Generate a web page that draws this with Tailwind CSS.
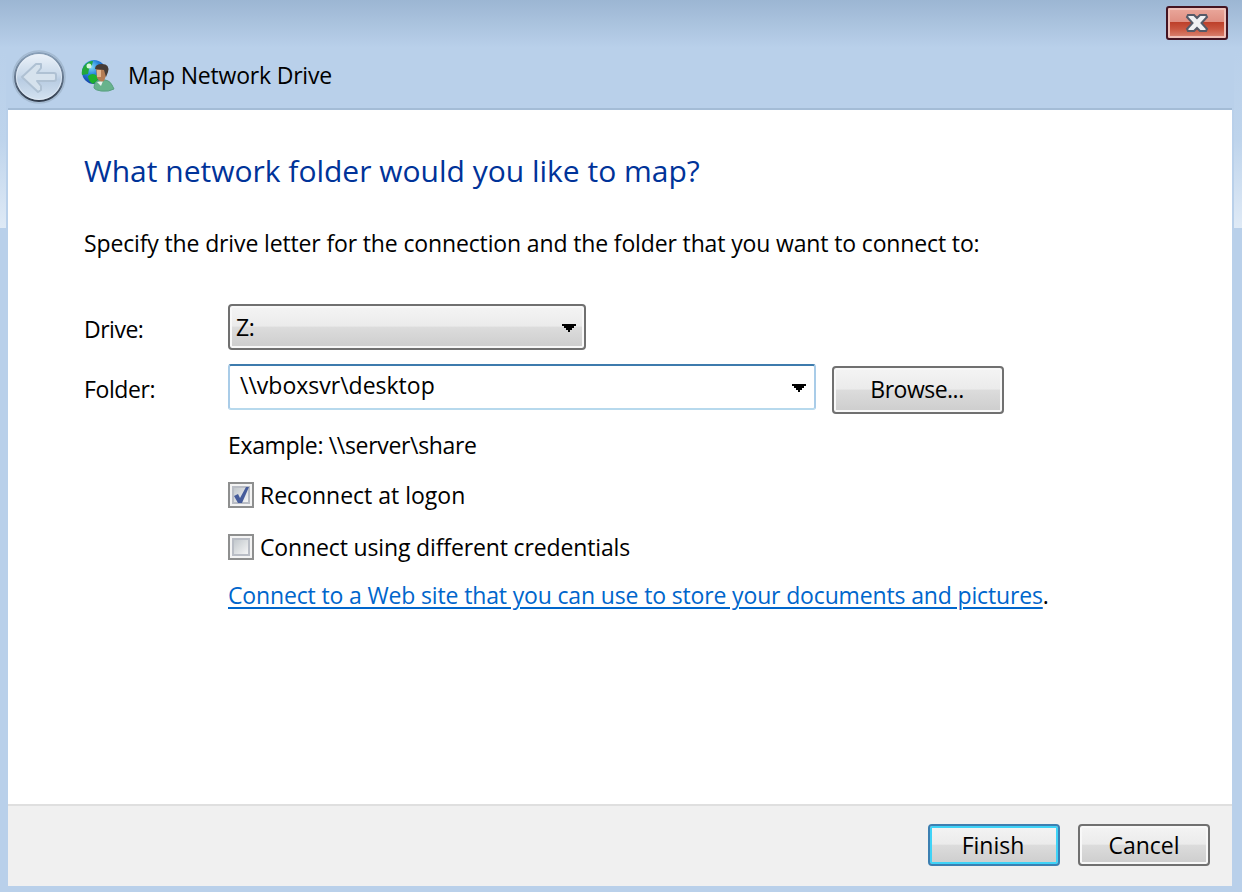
<!DOCTYPE html>
<html lang="en">
<head>
<meta charset="utf-8">
<title>Map Network Drive</title>
<script src="https://cdn.jsdelivr.net/npm/@tailwindcss/browser@4"></script>
</head>
<body class="w-[1242px] h-[892px] overflow-hidden bg-[#b9d0ea] font-['Open_Sans','Noto_Sans',sans-serif] text-[23px] leading-8 text-black whitespace-nowrap">
<div class="relative flex h-[892px] w-[1242px] flex-col pl-2 pr-[10px] pb-[6px]">
  <div class="absolute inset-x-0 top-0 h-[48px] bg-linear-to-b from-[#9cb6d3] to-[#b9d0ea]"></div>
  <div class="absolute left-0 top-[50px] h-[178px] w-[6px] bg-linear-to-b from-[#b9d0ea] via-[#bed4ec] to-[#dfeaf6]"></div>
  <div class="absolute right-0 top-[50px] h-[178px] w-[8px] bg-linear-to-b from-[#b9d0ea] via-[#bed4ec] to-[#dfeaf6]"></div>

  <header class="relative flex h-[110px] shrink-0 flex-col border-b-2 border-[#a4bcd6]">
    <div class="flex h-[40px] justify-end pt-[6px] pr-1">
      <button aria-label="Close" class="flex h-[34px] w-[62px] items-center justify-center rounded-[3px] border-2 border-[#431422] bg-[linear-gradient(#eaa89c_0%,#df8f82_46%,#bd402a_48%,#c95640_70%,#dc8877_100%)] shadow-[inset_0_0_0_2px_#efc0b9]">
        <svg width="24" height="20" viewBox="0 0 24 20"><path d="M3 2h6l3 3 3-3h6l1 2-5.500 6 5.500 6-1 2h-6l-3-3-3 3H3l-1-2 5.500-6L2 4z" fill="#f0f1f3" stroke="#555a68" stroke-width="2"/></svg>
      </button>
    </div>
    <div class="flex h-[68px] items-center pl-1">
      <svg class="mt-[5px] shrink-0" width="56" height="56" viewBox="0 0 56 56">
        <defs>
          <linearGradient id="orb" x2="0" y2="1"><stop stop-color="#edf3fa"/><stop offset=".45" stop-color="#c9d9ea"/><stop offset=".55" stop-color="#b8cce2"/><stop offset="1" stop-color="#d5e3f1"/></linearGradient>
          <linearGradient id="rim" x2="0" y2="1"><stop stop-color="#8aa0b8"/><stop offset=".5" stop-color="#66788e"/><stop offset="1" stop-color="#303b4b"/></linearGradient>
        </defs>
        <circle cx="27" cy="28" r="26" fill="none" stroke="#a4bad1" stroke-width="1.500"/>
        <circle cx="27" cy="28" r="24" fill="url(#orb)" stroke="url(#rim)" stroke-width="2"/>
        <circle cx="27" cy="28" r="22.500" fill="none" stroke="#e9f1fa" stroke-opacity=".7"/>
        <path d="M10 28 24 15h5v4l-4 5h17q2 0 2 2v4q0 2-2 2H25l4 5v4l-3 2z" fill="#d6e2ed" stroke="#afc1d3" stroke-width="2" stroke-linejoin="round"/>
      </svg>
      <svg class="ml-[12px] mt-[4px] shrink-0" width="36" height="36" viewBox="0 0 36 36">
        <defs><radialGradient id="sea" cx=".4" cy=".3" r=".7"><stop stop-color="#7fd6f4"/><stop offset=".45" stop-color="#2785dd"/><stop offset="1" stop-color="#123da4"/></radialGradient></defs>
        <circle cx="14" cy="14" r="12" fill="url(#sea)"/>
        <path d="M4 8q4-5 9-5l-1 4-3 4-1 5-6 1q-1-5 2-9z" fill="#22a73a"/><path d="M8 18q5-4 9 0l1 4-5 4q-5-3-5-8z" fill="#1cb02c"/><circle cx="9" cy="8" r="2.500" fill="#d5f7da"/>
        <path d="M14 30q0-8 7-8 8-1 11 5l2 4q-5 3-13 2-6-1-7-3z" fill="#67b38c" stroke="#5a9f82"/>
        <path d="m17 24 4 4 2-5z" fill="#e8f2ee"/>
        <path d="M16 11q2-4 7-3 5 1 4 7l-3 8q-4 2-7-3z" fill="#b47c55"/><path d="M17 12h4v7h-4z" fill="#e3b58e"/>
        <path d="M15 11q0-5 7-5 8 0 6 8l-2 5-2-7z" fill="#473c37"/>
      </svg>
      <h1 class="ml-[12px] mt-[2px] tracking-[-0.200px]">Map Network Drive</h1>
    </div>
  </header>

  <main class="relative flex flex-1 flex-col bg-white pl-[76px]">
    <h2 class="mt-[41px] h-10 text-[30px] leading-10 tracking-normal text-[#003399]">What network folder would you like to map?</h2>
    <p class="mt-[36px] h-8 tracking-[-0.140px]">Specify the drive letter for the connection and the folder that you want to connect to:</p>
    <div class="mt-[45px] flex h-[46px]">
      <label class="w-36 pt-[9px] tracking-[-0.500px]">Drive:</label>
      <div class="flex w-[358px] items-center justify-between rounded-[4px] border-2 border-[#707070] bg-[linear-gradient(#f4f4f4_0%,#ebebeb_48%,#dcdcdc_50%,#cdcdcd_100%)] pl-[6px] pr-[8px] shadow-[inset_0_0_0_2px_#f8f8f8]">
        <span class="tracking-[-0.500px]">Z:</span>
        <svg class="mt-[2px]" width="14" height="8" viewBox="0 0 14 8" shape-rendering="crispEdges"><path d="M0 0h14v2h-2v2h-2v2H8v2H6V6H4V4H2V2H0z"/></svg>
      </div>
    </div>
    <div class="mt-[14px] flex h-[50px]">
      <label class="w-36 pt-[9px] tracking-[-0.400px]">Folder:</label>
      <div class="flex h-[46px] w-[588px] items-center justify-between rounded-[3px] border-2 border-t-[#3d7bad] border-x-[#a9cce8] border-b-[#b7d9ed] pl-[10px] pr-[8px]">
        <span class="-mt-[4px] tracking-normal">\\vboxsvr\desktop</span>
        <svg class="mt-[2px]" width="14" height="8" viewBox="0 0 14 8" shape-rendering="crispEdges"><path d="M0 0h14v2h-2v2h-2v2H8v2H6V6H4V4H2V2H0z"/></svg>
      </div>
      <button class="mt-[2px] ml-4 h-[48px] w-[172px] rounded-[4px] border-2 border-[#707070] bg-[linear-gradient(#f4f4f4_0%,#ebebeb_48%,#dcdcdc_50%,#cdcdcd_100%)] pb-[2px] pr-[2px] tracking-[-0.500px] shadow-[inset_0_0_0_2px_#f8f8f8]">Browse...</button>
    </div>
    <div class="ml-36 flex flex-col">
      <p class="mt-[15px] h-8 tracking-[-0.330px]">Example: \\server\share</p>
      <label class="mt-[18px] flex h-8 items-center gap-[6px] tracking-normal">
        <svg width="26" height="26" viewBox="0 0 26 26"><defs><linearGradient id="box" x2="1" y2="1"><stop stop-color="#bfc5ca"/><stop offset="1" stop-color="#f8f8f8"/></linearGradient></defs><path d="M1 1h24v24H1z" fill="#f4f4f4" stroke="#8e8f8f" stroke-width="2"/><path d="M5 5h16v16H5z" fill="url(#box)" stroke="#b9bdc5" stroke-width="2"/><path d="m6 14 4-2 2 4 6-11h3l-7 16h-4z" fill="#465c9b"/></svg>
        <span>Reconnect at logon</span>
      </label>
      <label class="mt-[20px] flex h-8 items-center gap-[6px] tracking-[-0.140px]">
        <svg width="26" height="26" viewBox="0 0 26 26"><path d="M1 1h24v24H1z" fill="#f4f4f4" stroke="#8e8f8f" stroke-width="2"/><path d="M5 5h16v16H5z" fill="url(#box)" stroke="#b9bdc5" stroke-width="2"/></svg>
        <span>Connect using different credentials</span>
      </label>
      <p class="mt-[16px] h-8 tracking-[-0.150px]"><a class="text-[#0066cc] underline decoration-2 underline-offset-[3px]">Connect to a Web site that you can use to store your documents and pictures</a>.</p>
    </div>
  </main>

  <footer class="relative flex h-[82px] shrink-0 justify-end gap-[18px] border-t-2 border-[#dfdfdf] bg-[#f0f0f0] pt-[18px] pr-[22px]">
    <button class="h-[42px] w-[132px] rounded-[4px] border-2 border-[#3c7fb1] bg-[linear-gradient(#f4f4f4_0%,#ebebeb_48%,#dcdcdc_50%,#cdcdcd_100%)] pr-[2px] shadow-[inset_0_0_0_2px_#3fd3f7]">Finish</button>
    <button class="h-[42px] w-[132px] rounded-[4px] border-2 border-[#707070] bg-[linear-gradient(#f4f4f4_0%,#ebebeb_48%,#dcdcdc_50%,#cdcdcd_100%)] shadow-[inset_0_0_0_2px_#f8f8f8]">Cancel</button>
  </footer>
</div>
</body>
</html>
